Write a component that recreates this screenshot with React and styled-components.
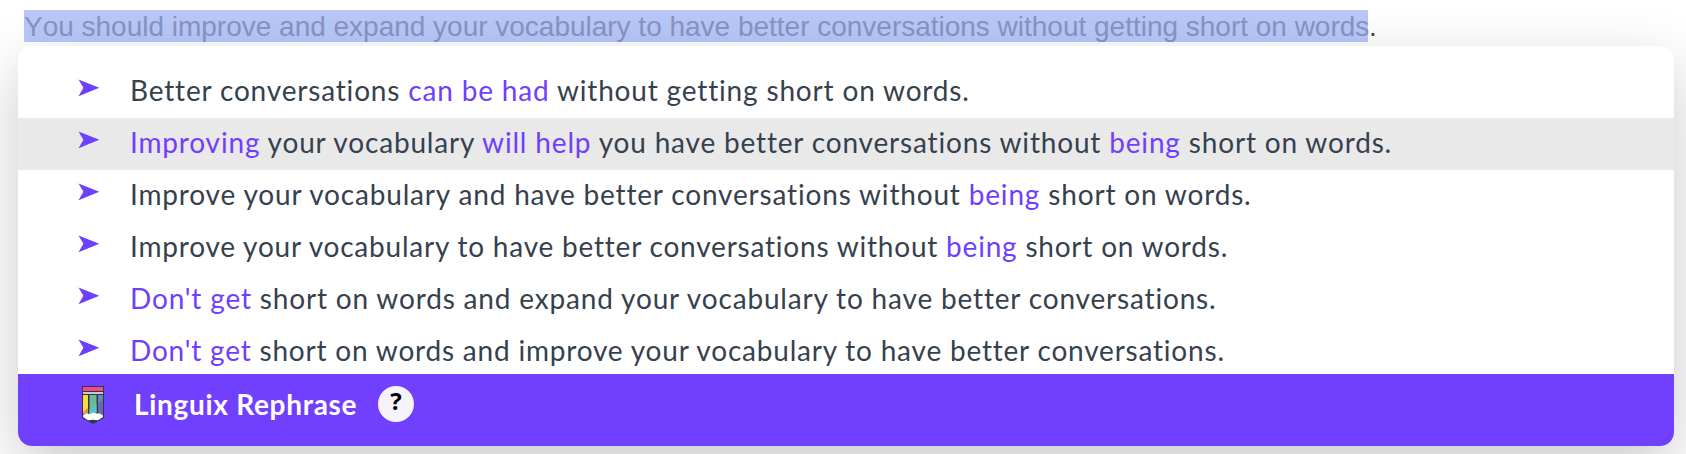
import styled, { createGlobalStyle } from "styled-components";

const suggestions = [
  {
    id: 1,
    tracking: 0.83,
    parts: [
      { text: "Better conversations " },
      { text: "can be had", changed: true },
      { text: " without getting short on words." },
    ],
  },
  {
    id: 2,
    tracking: 0.83,
    active: true,
    parts: [
      { text: "Improving", changed: true },
      { text: " your vocabulary " },
      { text: "will help", changed: true },
      { text: " you have better conversations without " },
      { text: "being", changed: true },
      { text: " short on words." },
    ],
  },
  {
    id: 3,
    tracking: 0.83,
    parts: [
      { text: "Improve your vocabulary and have better conversations without " },
      { text: "being", changed: true },
      { text: " short on words." },
    ],
  },
  {
    id: 4,
    tracking: 0.79,
    parts: [
      { text: "Improve your vocabulary to have better conversations without " },
      { text: "being", changed: true },
      { text: " short on words." },
    ],
  },
  {
    id: 5,
    tracking: 0.83,
    parts: [
      { text: "Don't get", changed: true },
      {
        text: " short on words and expand your vocabulary to have better conversations.",
      },
    ],
  },
  {
    id: 6,
    tracking: 0.8,
    parts: [
      { text: "Don't get", changed: true },
      {
        text: " short on words and improve your vocabulary to have better conversations.",
      },
    ],
  },
];

const ArrowIcon = () => (
  <svg width="22" height="18" viewBox="0 0 22 18">
    <path d="M0.5 0.5L21.3 8.7L0.5 17.2L5.4 8.7Z" fill="#703efe" />
  </svg>
);

const PencilIcon = () => (
  <svg width="22" height="38" viewBox="0 0 22 38">
    <path d="M0 0H22V32L11 38L0 32Z" fill="#333645" />
    <path d="M1 1H21V5H1Z" fill="#ee4c83" />
    <path d="M1 6H21V8H1Z" fill="#c9c9d3" />
    <path d="M1 9H6V24L1 28Z" fill="#f9d942" />
    <path d="M1 28V26L6 22V27Z" fill="#f7903a" />
    <path d="M7.5 9H14.5V28H7.5Z" fill="#68bd94" />
    <path d="M7.5 23L14.5 18V28H7.5Z" fill="#54c5cb" />
    <path d="M16 9H21V29L16 26Z" fill="#6287c3" />
    <path d="M16 17L21 14V29L16 26Z" fill="#6967ad" />
    <path
      d="M1 31V29.5Q3 26.5 6 27.5Q8 29 10 27Q12 26 14 28Q17 26.5 19 28Q20 29 21 29.5V31L16 34.3Q11 33 6 34.3Z"
      fill="#ffffff"
    />
  </svg>
);

const App = () => {
  return (
    <>
      <GlobalStyle />
      <Page>
        <Sentence>
          <Selected>
            You should improve and expand your vocabulary to have better
            conversations without getting short on words
          </Selected>
          .
        </Sentence>
        <Popup>
          <List>
            {suggestions.map(({ id, parts, active, tracking }) => (
              <Suggestion key={id} $active={active}>
                <ArrowIcon />
                <SuggestionText $tracking={tracking}>
                  {parts.map(({ text, changed }) =>
                    changed ? <Changed key={text}>{text}</Changed> : text
                  )}
                </SuggestionText>
              </Suggestion>
            ))}
          </List>
          <Footer>
            <PencilIcon />
            <FooterTitle>Linguix Rephrase</FooterTitle>
            <HelpButton>?</HelpButton>
          </Footer>
        </Popup>
      </Page>
    </>
  );
};

export default App;

const GlobalStyle = createGlobalStyle`
  * {
    box-sizing: border-box;
  }

  body {
    margin: 0;
    background: #ffffff;
    overflow: hidden;
  }
`;

const Page = styled.main`
  display: flex;
  flex-direction: column;
  height: 454px;
  padding: 10px 12px 0 18px;
  overflow: hidden;
`;

const Sentence = styled.p`
  display: flex;
  gap: 1px;
  flex: none;
  height: 36px;
  margin: 0;
  padding-left: 6px;
  color: #444444;
  font-family: "Liberation Sans", Arial, sans-serif;
  font-size: 28px;
  font-kerning: none;
  letter-spacing: -0.01px;
  line-height: 34px;
  white-space: nowrap;
`;

const Selected = styled.span`
  width: 1344px;
  height: 32px;
  background: #b9c8f8;
  color: #8794c6;
`;

const Popup = styled.section`
  flex: none;
  position: relative;
  height: 400px;
  border-radius: 14px;
  background: #ffffff;
  box-shadow: 0 20px 60px rgba(0, 0, 0, 0.21);
  overflow: hidden;
`;

const List = styled.ul`
  height: 328px;
  margin: 0;
  padding: 20px 0 0;
  list-style: none;
  overflow: hidden;
`;

const Suggestion = styled.li`
  display: flex;
  align-items: flex-start;
  gap: 30px;
  height: 52px;
  padding: 13px 0 0 60px;
  background: ${({ $active }) => ($active ? "#e9e9e9" : "transparent")};
`;

const SuggestionText = styled.span`
  color: #36414e;
  font-family: Lato, "Open Sans", sans-serif;
  font-size: 28px;
  line-height: 22px;
  letter-spacing: ${({ $tracking }) => $tracking}px;
  white-space: pre;
`;

const Changed = styled.span`
  color: #703efe;
`;

const Footer = styled.footer`
  display: flex;
  align-items: flex-start;
  height: 72px;
  padding: 12px 0 0 64px;
  background: #713ffe;
`;

const FooterTitle = styled.h2`
  flex: none;
  width: 226px;
  margin: 0 18px 0 30px;
  color: #ffffff;
  font-family: Lato, "Open Sans", sans-serif;
  font-size: 28px;
  font-weight: 700;
  letter-spacing: 0.7px;
  line-height: 36px;
  white-space: nowrap;
`;

const HelpButton = styled.button`
  width: 36px;
  height: 36px;
  padding: 0 0 7px;
  border: 0;
  border-radius: 50%;
  background: #f6f3ff;
  color: #000000;
  font-family: "Open Sans", sans-serif;
  font-size: 24px;
  font-weight: 700;
  line-height: 28px;
`;
